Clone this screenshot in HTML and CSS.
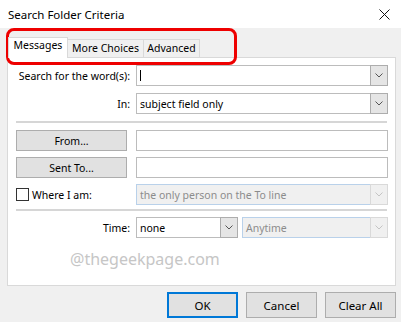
FILE: index.html
```html
<!DOCTYPE html>
<html lang="en">
<head>
  <meta charset="UTF-8" />
  <title>Search Folder Criteria</title>
  <link rel="stylesheet" href="styles.css">
</head>
<body>
  <div class="titlebar">
    <span class="title">Search Folder Criteria</span>
    <svg class="close" width="11" height="11" viewBox="0 0 11 11"><path d="M0.5 0.5 L10.5 10.5 M10.5 0.5 L0.5 10.5" stroke="#111" stroke-width="1" fill="none"/></svg>
  </div>

  <div class="dialog">
    <div class="tabs">
      <div class="tab active">Messages</div>
      <div class="tab more">More Choices</div>
      <div class="tab adv">Advanced</div>
    </div>

    <div class="panel">
      <div class="row">
        <span class="label">Search for the word(s):</span>
        <div class="field"><span class="caret"></span><span class="drop"><svg width="8" height="5" viewBox="0 0 8 5"><polyline points="0.5,0.5 4,4 7.5,0.5" fill="none" stroke="#555"/></svg></span></div>
      </div>
      <div class="row gap7">
        <span class="label">In:</span>
        <div class="field">subject field only<span class="drop"><svg width="8" height="5" viewBox="0 0 8 5"><polyline points="0.5,0.5 4,4 7.5,0.5" fill="none" stroke="#555"/></svg></span></div>
      </div>

      <div class="sep first"></div>

      <div class="row">
        <button class="btn">From...</button>
        <div class="field"></div>
      </div>
      <div class="row gap6">
        <button class="btn">Sent To...</button>
        <div class="field"></div>
      </div>
      <div class="row gap6">
        <label class="check"><span class="box"></span>Where I am:</label>
        <div class="field disabled">the only person on the To line<span class="drop"><svg width="8" height="5" viewBox="0 0 8 5"><polyline points="0.5,0.5 4,4 7.5,0.5" fill="none" stroke="#c4c4c4"/></svg></span></div>
      </div>

      <div class="sep second"></div>

      <div class="row">
        <span class="label">Time:</span>
        <div class="pair">
          <div class="field time">none<span class="drop"><svg width="8" height="5" viewBox="0 0 8 5"><polyline points="0.5,0.5 4,4 7.5,0.5" fill="none" stroke="#555"/></svg></span></div>
          <div class="field disabled">Anytime<span class="drop"><svg width="8" height="5" viewBox="0 0 8 5"><polyline points="0.5,0.5 4,4 7.5,0.5" fill="none" stroke="#c4c4c4"/></svg></span></div>
        </div>
      </div>

      <div class="watermark">@thegeekpage.com</div>
    </div>

    <div class="actions">
      <button class="action primary">OK</button>
      <button class="action">Cancel</button>
      <button class="action">Clear All</button>
    </div>

    <div class="highlight"></div>
  </div>
</body>
</html>
```

FILE: styles.css
```css
* {
  box-sizing: border-box;
}
body {
  margin: 0;
  width: 401px;
  height: 322px;
  overflow: hidden;
  background: #f0f0f0;
  font-family: "Noto Sans", "Open Sans", sans-serif;
  font-size: 10.5px;
  color: #000;
}
.titlebar {
  height: 28px;
  background: #fff;
  display: flex;
  align-items: center;
  justify-content: space-between;
  padding: 0 11px 0 8px;
  font-size: 11.5px;
}
.dialog {
  position: relative;
  padding: 9px 5px 0 7px;
}
.tabs {
  display: flex;
  align-items: flex-end;
  height: 20px;
  padding-left: 1px;
}
.tab {
  width: 60px;
  height: 18px;
  border: 1px solid #d9d9d9;
  border-bottom: none;
  background: #f0f0f0;
  line-height: 16px;
  text-align: center;
  white-space: nowrap;
}
.tab.more {
  width: 76px;
}
.tab.adv {
  width: 56px;
}
.tab + .tab {
  border-left: none;
}
.tab.active {
  height: 21px;
  margin-bottom: -1px;
  background: #fff;
  position: relative;
  z-index: 1;
  line-height: 15px;
}
.panel {
  height: 229px;
  background: #fff;
  border: 1px solid #d9d9d9;
  padding: 7px 7px 0 8px;
}
.row {
  display: grid;
  grid-template-columns: 114px 1fr;
  column-gap: 6px;
  align-items: center;
  height: 21px;
}
.gap7 {
  margin-top: 7px;
}
.gap6 {
  margin-top: 6px;
}
.label {
  text-align: right;
  white-space: nowrap;
}
.field {
  height: 21px;
  border: 1px solid #bcbcbc;
  background: #fff;
  display: flex;
  align-items: center;
  padding-left: 3px;
  white-space: nowrap;
}
.field.disabled {
  background: #f0f0f0;
  border-color: #b9d1ea;
  color: #8c8c8c;
}
.drop {
  margin: -1px -1px -1px auto;
  width: 18px;
  height: 21px;
  border: 1px solid #adadad;
  background: #e5e5e5;
  display: flex;
  align-items: center;
  justify-content: center;
}
.disabled .drop {
  border-color: #d9d9d9;
  background: #f0f0f0;
}
.caret {
  width: 1px;
  height: 11px;
  background: #000;
}
.sep {
  height: 2px;
  background: #d6d6d6;
  margin-right: 1px;
}
.sep.first {
  margin-top: 7px;
  margin-bottom: 7px;
}
.sep.second {
  margin-top: 4px;
  margin-bottom: 6px;
}
.btn {
  width: 111px;
  height: 21px;
  padding: 0;
  border: 1px solid #adadad;
  background: #e1e1e1;
  font: inherit;
  color: #000;
}
.check {
  display: flex;
  align-items: center;
  gap: 3px;
}
.box {
  width: 13px;
  height: 13px;
  border: 1px solid #333;
  background: #fff;
}
.pair {
  display: grid;
  grid-template-columns: 102px 1fr;
  column-gap: 4px;
}
.watermark {
  margin: 10px 0 0 54px;
  font-size: 16px;
  color: #c6c6c6;
}
.actions {
  display: flex;
  justify-content: flex-end;
  gap: 8px;
  margin-top: 6px;
}
.action {
  width: 71px;
  height: 26px;
  padding: 0;
  border: 1px solid #adadad;
  background: #e1e1e1;
  font: inherit;
  font-size: 11.5px;
  color: #000;
}
.action.primary {
  border: 2px solid #0078d7;
}
.highlight {
  position: absolute;
  left: 6px;
  top: 0;
  width: 231px;
  height: 37px;
  border: 3px solid #ee0000;
  border-radius: 8px;
}
```
